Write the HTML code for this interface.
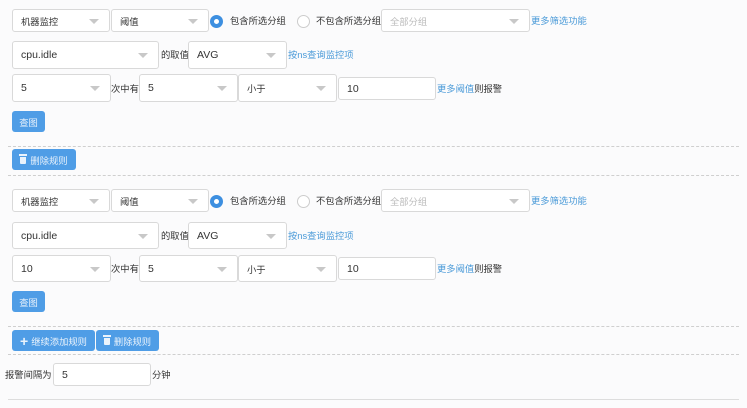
<!DOCTYPE html>
<html><head><meta charset="utf-8"><style>
body{margin:0;width:747px;height:408px;background:#fbfbfc;font-family:"Liberation Sans","Noto Sans CJK SC",sans-serif;font-size:10.5px;color:#333;position:relative;overflow:hidden}
.a{position:absolute}
.sel{position:absolute;box-sizing:border-box;background:#fff;border:1px solid #d9d9d9;border-radius:3px;padding-left:8px;display:flex;align-items:center}
.sel.dd::after{content:"";position:absolute;right:10px;top:50%;margin-top:-2px;border-left:5px solid transparent;border-right:5px solid transparent;border-top:5px solid #c8c8c8}
.t{position:absolute;line-height:14px;font-size:9.3px;white-space:nowrap}
.c{font-size:9.3px}
.lk{color:#4a9ad8}
.btn{position:absolute;background:#4f9de6;color:#eaf3fc;border-radius:3px;display:flex;align-items:center;justify-content:center;font-size:9.3px}
.rad{position:absolute;width:13px;height:13px;border-radius:50%;box-sizing:border-box;border:1px solid #ccc;background:#fff}
.rad.on{border:4px solid #3d8fe0}
.dash{position:absolute;left:8px;right:8px;border-top:1px dashed #cfcfcf}
.tr{display:inline-block;width:6px;height:7px;background:#eaf3fc;border-radius:0 0 1px 1px;margin-right:4px;position:relative;top:1px}
.tr::before{content:"";position:absolute;left:-1px;top:-3px;width:8px;height:2px;background:#eaf3fc}
</style></head><body>

<!-- section 1 -->
<div class="sel dd c" style="left:12px;top:9px;width:98px;height:23px">机器监控</div>
<div class="sel dd c" style="left:111px;top:9px;width:98px;height:23px">阈值</div>
<div class="rad on" style="left:210px;top:15px"></div>
<div class="t" style="left:230px;top:14px">包含所选分组</div>
<div class="rad" style="left:297px;top:15px"></div>
<div class="t" style="left:316px;top:14px">不包含所选分组</div>
<div class="sel dd c" style="left:381px;top:9px;width:149px;height:23px;color:#bbb">全部分组</div>
<div class="t lk" style="left:531px;top:14px">更多筛选功能</div>

<div class="sel dd" style="left:12px;top:41px;width:147px;height:28px">cpu.idle</div>
<div class="t" style="left:161px;top:48px">的取值</div>
<div class="sel dd" style="left:188px;top:41px;width:99px;height:28px">AVG</div>
<div class="t lk" style="left:288px;top:48px">按ns查询监控项</div>

<div class="sel dd" style="left:12px;top:74px;width:99px;height:28px">5</div>
<div class="t" style="left:111px;top:82px">次中有</div>
<div class="sel dd" style="left:139px;top:74px;width:99px;height:28px">5</div>
<div class="sel dd c" style="left:238px;top:74px;width:99px;height:28px">小于</div>
<div class="sel" style="left:338px;top:77px;width:98px;height:23px">10</div>
<div class="t" style="left:437px;top:82px"><span class="lk">更多阈值</span>则报警</div>

<div class="btn" style="left:12px;top:111px;width:33px;height:21px">查图</div>
<div class="dash" style="top:146px"></div>
<div class="btn" style="left:12px;top:149px;width:64px;height:21px"><span class="tr"></span>删除规则</div>
<div class="dash" style="top:175px"></div>

<!-- section 2 -->
<div class="sel dd c" style="left:12px;top:189px;width:98px;height:23px">机器监控</div>
<div class="sel dd c" style="left:111px;top:189px;width:98px;height:23px">阈值</div>
<div class="rad on" style="left:210px;top:195px"></div>
<div class="t" style="left:230px;top:194px">包含所选分组</div>
<div class="rad" style="left:297px;top:195px"></div>
<div class="t" style="left:316px;top:194px">不包含所选分组</div>
<div class="sel dd c" style="left:381px;top:189px;width:149px;height:23px;color:#bbb">全部分组</div>
<div class="t lk" style="left:531px;top:194px">更多筛选功能</div>

<div class="sel dd" style="left:12px;top:222px;width:147px;height:27px">cpu.idle</div>
<div class="t" style="left:161px;top:229px">的取值</div>
<div class="sel dd" style="left:188px;top:222px;width:99px;height:27px">AVG</div>
<div class="t lk" style="left:288px;top:229px">按ns查询监控项</div>

<div class="sel dd" style="left:12px;top:255px;width:99px;height:27px">10</div>
<div class="t" style="left:111px;top:262px">次中有</div>
<div class="sel dd" style="left:139px;top:255px;width:99px;height:27px">5</div>
<div class="sel dd c" style="left:238px;top:255px;width:99px;height:27px">小于</div>
<div class="sel" style="left:338px;top:257px;width:98px;height:23px">10</div>
<div class="t" style="left:437px;top:262px"><span class="lk">更多阈值</span>则报警</div>

<div class="btn" style="left:12px;top:291px;width:33px;height:21px">查图</div>
<div class="dash" style="top:326px"></div>
<div class="btn" style="left:12px;top:330px;width:83px;height:21px"><b style="font-size:14px;margin-right:3px">+</b>继续添加规则</div>
<div class="btn" style="left:96px;top:330px;width:63px;height:21px"><span class="tr"></span>删除规则</div>
<div class="dash" style="top:354px"></div>

<div class="t" style="left:5px;top:368px">报警间隔为</div>
<div class="sel" style="left:53px;top:363px;width:98px;height:23px">5</div>
<div class="t" style="left:152px;top:368px">分钟</div>
<div class="a" style="left:8px;right:8px;top:399px;border-top:1px solid #ddd"></div>
</body></html>
